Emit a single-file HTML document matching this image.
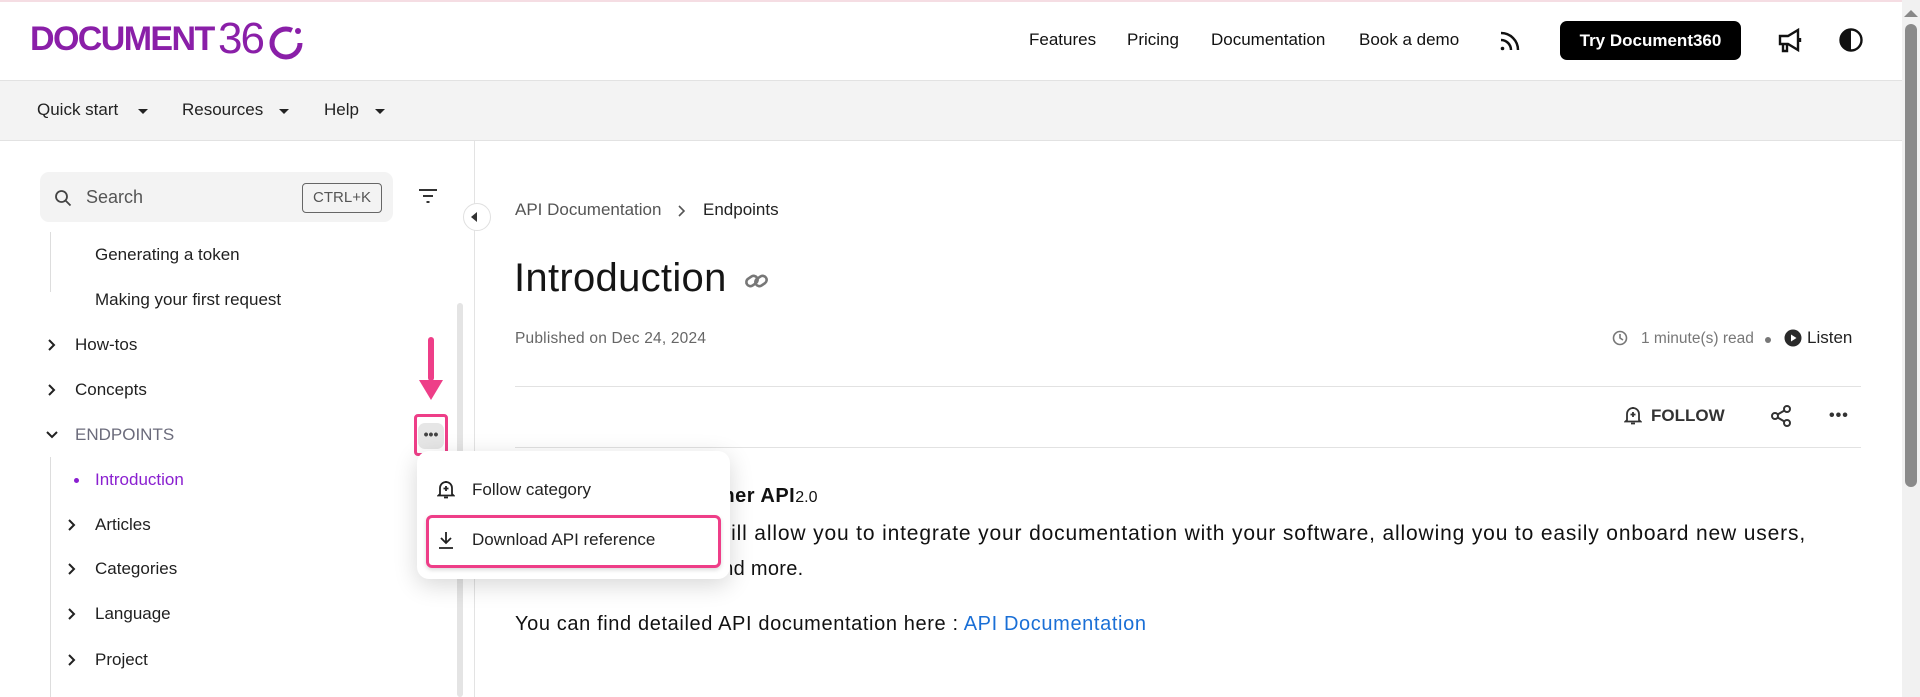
<!DOCTYPE html>
<html><head><meta charset="utf-8">
<style>
*{margin:0;padding:0;box-sizing:border-box}
body{width:1920px;height:697px;overflow:hidden;background:#fff;font-family:"Liberation Sans",sans-serif;color:#1a1a1a;position:relative}
.a{position:absolute;white-space:nowrap}
.nav{font-size:17px;color:#111}
.side{font-size:17px;color:#1f1f1f}
.body{font-size:21px;letter-spacing:0.85px;color:#111}
svg{display:block}
</style></head><body>
<div class="a" style="left:0;top:0;width:1920px;height:2px;background:#f5dde3"></div>
<!-- logo -->
<div class="a" style="left:30px;top:20px;font-size:34px;font-weight:bold;color:#8a1fa8;letter-spacing:-1.6px">DOCUMENT</div>
<div class="a" style="left:218px;top:14px;font-size:44px;color:#8a1fa8;letter-spacing:-2px">36</div>
<svg class="a" style="left:268px;top:23px" width="40" height="38"><circle cx="18" cy="20" r="14" fill="none" stroke="#8a1fa8" stroke-width="5" stroke-dasharray="72 20"/><circle cx="30" cy="8" r="3" fill="#8a1fa8"/></svg>
<!-- header nav -->
<div class="a nav" style="left:1029px;top:30px">Features</div>
<div class="a nav" style="left:1127px;top:30px">Pricing</div>
<div class="a nav" style="left:1211px;top:30px">Documentation</div>
<div class="a nav" style="left:1359px;top:30px">Book a demo</div>
<svg class="a" style="left:1498px;top:29px" width="24" height="24" fill="none" stroke="#111" stroke-width="2.5"><path d="M3 4a17 17 0 0 1 17 17M3 11a10 10 0 0 1 10 10"/><circle cx="4.5" cy="19.5" r="1.8" fill="#111" stroke="none"/></svg>
<div class="a" style="left:1560px;top:21px;width:181px;height:39px;background:#000;border-radius:7px;color:#fff;font-size:17px;font-weight:bold;text-align:center;line-height:39px">Try Document360</div>
<svg class="a" style="left:1777px;top:27px" width="28" height="28" fill="none" stroke="#111" stroke-width="2.4"><path d="M3 9h8l10-6v20l-10-6H3z M6 17v7h4v-7"/><path d="M23 11v4"/></svg>
<svg class="a" style="left:1838px;top:27px" width="26" height="26"><circle cx="13" cy="13" r="10.5" fill="none" stroke="#111" stroke-width="2.4"/><path d="M13 2.5a10.5 10.5 0 0 0 0 21z" fill="#111"/></svg>
<!-- page scrollbar -->
<div class="a" style="left:1902px;top:0;width:18px;height:697px;background:#f1f1f1"></div>
<div class="a" style="left:1904px;top:10px;width:0;height:0;border-left:7px solid transparent;border-right:7px solid transparent;border-bottom:7px solid #888"></div>
<div class="a" style="left:1905px;top:24px;width:12px;height:463px;background:#8a8a8a;border-radius:6px"></div>
<!-- subnav -->
<div class="a" style="left:0;top:80px;width:1902px;height:61px;background:#f3f3f3;border-top:1px solid #e2e2e2;border-bottom:1px solid #e2e2e2"></div>
<div class="a nav" style="left:37px;top:100px;color:#222">Quick start</div>
<div class="a" style="left:138px;top:109px;border-left:5px solid transparent;border-right:5px solid transparent;border-top:5px solid #222"></div>
<div class="a nav" style="left:182px;top:100px;color:#222">Resources</div>
<div class="a" style="left:279px;top:109px;border-left:5px solid transparent;border-right:5px solid transparent;border-top:5px solid #222"></div>
<div class="a nav" style="left:324px;top:100px;color:#222">Help</div>
<div class="a" style="left:375px;top:109px;border-left:5px solid transparent;border-right:5px solid transparent;border-top:5px solid #222"></div>
<!-- sidebar -->
<div class="a" style="left:474px;top:141px;width:1px;height:556px;background:#e3e3e3"></div>
<div class="a" style="left:40px;top:172px;width:353px;height:50px;background:#f3f3f3;border-radius:9px"></div>
<svg class="a" style="left:54px;top:189px" width="18" height="18" fill="none" stroke="#444" stroke-width="1.8"><circle cx="7.5" cy="7.5" r="5.5"/><path d="M11.5 11.5l5 5"/></svg>
<div class="a" style="left:86px;top:187px;font-size:18px;color:#555">Search</div>
<div class="a" style="left:302px;top:183px;width:80px;height:30px;border:1px solid #666;border-radius:4px;font-size:15px;color:#555;text-align:center;line-height:28px">CTRL+K</div>
<svg class="a" style="left:418px;top:187px" width="20" height="18" stroke="#333" stroke-width="2"><path d="M1 3h18M5 9h10M8.5 15h3"/></svg>
<div class="a" style="left:463px;top:203px;width:28px;height:28px;border-radius:50%;background:#fff;border:1px solid #e0e0e0"></div>
<div class="a" style="left:471px;top:212px;border-top:5px solid transparent;border-bottom:5px solid transparent;border-right:6px solid #333"></div>
<div class="a" style="left:50px;top:232px;width:1px;height:60px;background:#ddd"></div>
<div class="a side" style="left:95px;top:245px">Generating a token</div>
<div class="a side" style="left:95px;top:290px">Making your first request</div>
<div class="a" style="left:457px;top:303px;width:6px;height:394px;background:#e4e4e4;border-radius:3px"></div>
<svg class="a" style="left:46px;top:338px" width="12" height="14" fill="none" stroke="#222" stroke-width="2"><path d="M3 2l5 5-5 5"/></svg>
<div class="a side" style="left:75px;top:335px">How-tos</div>
<svg class="a" style="left:46px;top:383px" width="12" height="14" fill="none" stroke="#222" stroke-width="2"><path d="M3 2l5 5-5 5"/></svg>
<div class="a side" style="left:75px;top:380px">Concepts</div>
<svg class="a" style="left:45px;top:429px" width="14" height="12" fill="none" stroke="#222" stroke-width="2"><path d="M2 3l5 5 5-5"/></svg>
<div class="a side" style="left:75px;top:425px;color:#6b6b7b">ENDPOINTS</div>
<div class="a" style="left:50px;top:457px;width:1px;height:240px;background:#ddd"></div>
<div class="a" style="left:74px;top:478px;width:5px;height:5px;border-radius:50%;background:#8a1fd0"></div>
<div class="a side" style="left:95px;top:470px;color:#8a1fd0">Introduction</div>
<svg class="a" style="left:66px;top:518px" width="12" height="14" fill="none" stroke="#222" stroke-width="2"><path d="M3 2l5 5-5 5"/></svg>
<div class="a side" style="left:95px;top:515px">Articles</div>
<svg class="a" style="left:66px;top:562px" width="12" height="14" fill="none" stroke="#222" stroke-width="2"><path d="M3 2l5 5-5 5"/></svg>
<div class="a side" style="left:95px;top:559px">Categories</div>
<svg class="a" style="left:66px;top:607px" width="12" height="14" fill="none" stroke="#222" stroke-width="2"><path d="M3 2l5 5-5 5"/></svg>
<div class="a side" style="left:95px;top:604px">Language</div>
<svg class="a" style="left:66px;top:653px" width="12" height="14" fill="none" stroke="#222" stroke-width="2"><path d="M3 2l5 5-5 5"/></svg>
<div class="a side" style="left:95px;top:650px">Project</div>
<!-- arrow -->
<div class="a" style="left:428px;top:337px;width:6px;height:44px;background:#ee3e88;border-radius:3px"></div>
<div class="a" style="left:419px;top:380px;border-left:12px solid transparent;border-right:12px solid transparent;border-top:20px solid #ee3e88"></div>
<div class="a" style="left:414px;top:414px;width:34px;height:42px;border:3px solid #ee3e88;border-radius:4px"></div>
<div class="a" style="left:418px;top:423px;width:26px;height:26px;background:#e6e6e6;border-radius:7px;font-size:14px;font-weight:bold;color:#444;text-align:center;line-height:22px">•••</div>
<!-- content -->
<div class="a" style="left:515px;top:200px;font-size:17px;color:#555">API Documentation</div>
<svg class="a" style="left:677px;top:204px" width="10" height="14" fill="none" stroke="#555" stroke-width="1.6"><path d="M2 2l5 5-5 5"/></svg>
<div class="a" style="left:703px;top:200px;font-size:17px;color:#222">Endpoints</div>
<div class="a" style="left:514px;top:256px;font-size:40px;color:#151515;letter-spacing:0.3px">Introduction</div>
<svg class="a" style="left:744px;top:271px" width="26" height="20" fill="none" stroke="#777" stroke-width="2.6"><rect x="2" y="6" width="12" height="8" rx="4" transform="rotate(-35 8 10)"/><rect x="11" y="6" width="12" height="8" rx="4" transform="rotate(-35 17 10)"/></svg>
<div class="a" style="left:515px;top:330px;font-size:15.5px;color:#666;letter-spacing:0.2px">Published on Dec 24, 2024</div>
<svg class="a" style="left:1612px;top:330px" width="16" height="16" fill="none" stroke="#777" stroke-width="1.6"><circle cx="8" cy="8" r="6.5"/><path d="M8 4v4l3 2"/></svg>
<div class="a" style="left:1641px;top:330px;font-size:15.5px;color:#777">1 minute(s) read</div>
<div class="a" style="left:1765px;top:337px;width:6px;height:6px;border-radius:50%;background:#777"></div>
<svg class="a" style="left:1784px;top:329px" width="18" height="18"><circle cx="9" cy="9" r="8.5" fill="#2a2a2a"/><path d="M7 5.5v7l5.5-3.5z" fill="#fff"/></svg>
<div class="a" style="left:1807px;top:328px;font-size:17px;color:#222">Listen</div>
<div class="a" style="left:515px;top:386px;width:1346px;height:1px;background:#e2e2e2"></div>
<svg class="a" style="left:1624px;top:405px" width="18" height="20" fill="none" stroke="#333" stroke-width="1.8"><path d="M3 15V9a6 6 0 0 1 12 0v6l1.5 1.5h-15z M7 18.5h4 M9 2v2 M9 7v5M6.5 9.5h5"/></svg>
<div class="a" style="left:1651px;top:406px;font-size:17px;font-weight:bold;color:#333">FOLLOW</div>
<svg class="a" style="left:1769px;top:404px" width="24" height="24" fill="none" stroke="#333" stroke-width="2"><circle cx="18" cy="5" r="3"/><circle cx="6" cy="12" r="3"/><circle cx="18" cy="19" r="3"/><path d="M8.6 10.5l6.8-4M8.6 13.5l6.8 4"/></svg>
<div class="a" style="left:1829px;top:407px;font-size:16px;font-weight:bold;color:#333;letter-spacing:1px">•••</div>
<div class="a" style="left:515px;top:447px;width:1346px;height:1px;background:#e2e2e2"></div>
<div class="a" style="left:515px;top:485px;font-size:20px;color:#111;letter-spacing:0.5px"><b>Document360 Customer API</b><span style="font-size:16px;letter-spacing:0">2.0</span></div>
<div class="a body" style="left:515px;top:522px">Document360 APIs will allow you to integrate your documentation with your software, allowing you to easily onboard new users,</div>
<div class="a" style="left:515px;top:558px;font-size:20px;color:#111;letter-spacing:0.3px">manage permissions and more.</div>
<div class="a" style="left:515px;top:613px;font-size:20px;color:#111;letter-spacing:0.62px">You can find detailed API documentation here : <span style="color:#1a6fd6">API Documentation</span></div>
<!-- dropdown -->
<div class="a" style="left:417px;top:451px;width:313px;height:128px;background:#fff;border-radius:12px;box-shadow:0 6px 24px rgba(0,0,0,0.16)"></div>
<svg class="a" style="left:437px;top:479px" width="18" height="20" fill="none" stroke="#222" stroke-width="1.8"><path d="M3 15V9a6 6 0 0 1 12 0v6l1.5 1.5h-15z M7 18.5h4 M9 2v2 M9 7v5M6.5 9.5h5"/></svg>
<div class="a" style="left:472px;top:480px;font-size:17px;color:#222">Follow category</div>
<div class="a" style="left:426px;top:515px;width:295px;height:53px;border:3px solid #ee3e88;border-radius:6px;box-shadow:0 2px 4px rgba(0,0,0,0.15)"></div>
<svg class="a" style="left:437px;top:530px" width="18" height="20" fill="none" stroke="#222" stroke-width="1.8"><path d="M9 2v11M4 8l5 5 5-5M2 18h14"/></svg>
<div class="a" style="left:472px;top:530px;font-size:17px;color:#222">Download API reference</div>
</body></html>
